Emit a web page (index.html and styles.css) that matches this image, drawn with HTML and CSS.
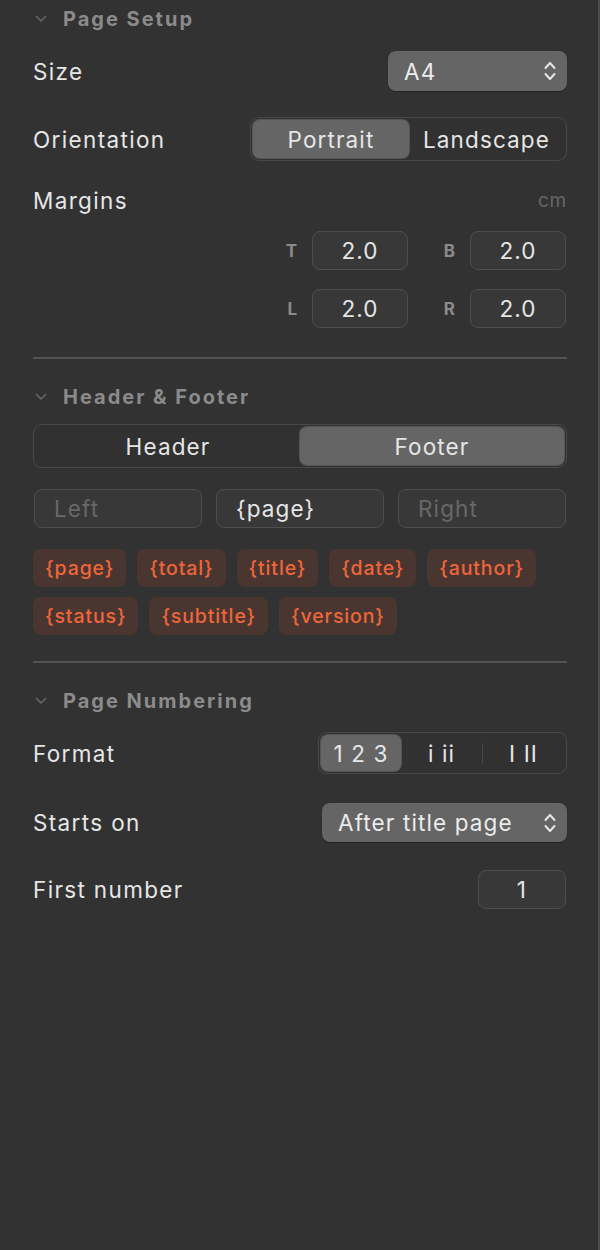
FILE: index.html
```html
<!DOCTYPE html>
<html lang="en">

<head>
  <meta charset="UTF-8">
  <meta name="viewport" content="width=device-width, initial-scale=1.0">
  <title>Page Setup</title>
  <link rel="stylesheet" href="styles.css">
</head>

<body>
  <div class="panel">
    <!-- Page Setup -->
    <div class="section-head">
      <svg class="chev" width="12" height="8" viewBox="0 0 12 8"><path d="M1.5 1.5 L6 6 L10.5 1.5" /></svg>
      <span>Page Setup</span>
    </div>
    <div class="row row-size">
      <span class="label">Size</span>
      <div class="select select-size">
        <span>A4</span>
        <svg class="updown" width="14" height="24" viewBox="0 0 14 24"><path d="M2.5 9 L7 4 L11.5 9 M2.5 15 L7 20 L11.5 15" /></svg>
      </div>
    </div>
    <div class="row row-orient">
      <span class="label">Orientation</span>
      <div class="seg seg-orient">
        <div class="seg-item on">Portrait</div>
        <div class="seg-item">Landscape</div>
      </div>
    </div>
    <div class="row row-margins">
      <span class="label">Margins</span>
      <span class="unit">cm</span>
    </div>
    <div class="margin-grid">
      <span class="mlabel">T</span>
      <div class="field num">2.0</div>
      <span class="mlabel">B</span>
      <div class="field num">2.0</div>
      <span class="mlabel">L</span>
      <div class="field num">2.0</div>
      <span class="mlabel">R</span>
      <div class="field num">2.0</div>
    </div>
    <div class="divider"></div>

    <!-- Header & Footer -->
    <div class="section-head">
      <svg class="chev" width="12" height="8" viewBox="0 0 12 8"><path d="M1.5 1.5 L6 6 L10.5 1.5" /></svg>
      <span>Header &amp; Footer</span>
    </div>
    <div class="seg seg-hf">
      <div class="seg-item">Header</div>
      <div class="seg-item on">Footer</div>
    </div>
    <div class="hf-fields">
      <div class="field text placeholder">Left</div>
      <div class="field text">{page}</div>
      <div class="field text placeholder">Right</div>
    </div>
    <div class="chips">
      <span class="chip">{page}</span>
      <span class="chip">{total}</span>
      <span class="chip">{title}</span>
      <span class="chip">{date}</span>
      <span class="chip">{author}</span>
      <span class="chip">{status}</span>
      <span class="chip">{subtitle}</span>
      <span class="chip">{version}</span>
    </div>
    <div class="divider divider-2"></div>

    <!-- Page Numbering -->
    <div class="section-head">
      <svg class="chev" width="12" height="8" viewBox="0 0 12 8"><path d="M1.5 1.5 L6 6 L10.5 1.5" /></svg>
      <span>Page Numbering</span>
    </div>
    <div class="row row-format">
      <span class="label">Format</span>
      <div class="seg seg-format">
        <div class="seg-item on">1 2 3</div>
        <div class="seg-item">i ii</div>
        <div class="sep"></div>
        <div class="seg-item">I II</div>
      </div>
    </div>
    <div class="row row-starts">
      <span class="label">Starts on</span>
      <div class="select select-starts">
        <span>After title page</span>
        <svg class="updown" width="14" height="24" viewBox="0 0 14 24"><path d="M2.5 9 L7 4 L11.5 9 M2.5 15 L7 20 L11.5 15" /></svg>
      </div>
    </div>
    <div class="row row-first">
      <span class="label">First number</span>
      <div class="field num first">1</div>
    </div>
  </div>
</body>

</html>
```

FILE: styles.css
```css
* {
  margin: 0;
  padding: 0;
  box-sizing: border-box;
}

body {
  background-color: #323232;
  font-family: Inter, "Noto Sans", "Liberation Sans", sans-serif;
  color: #e6e6e6;
}

.panel {
  width: 600px;
  height: 1250px;
  padding: 7px 31px 0 33px;
  border-right: 2px solid #4b4b4b;
}

/* section header */
.section-head {
  height: 24px;
  display: flex;
  align-items: center;
  font-size: 20px;
  font-weight: 700;
  letter-spacing: 2px;
  color: #8b8b8b;
}

.chev {
  margin-left: 2px;
  margin-right: 16px;
  fill: none;
  stroke: #666;
  stroke-width: 1.6;
  stroke-linecap: round;
  stroke-linejoin: round;
}

.row {
  display: flex;
  align-items: center;
  justify-content: space-between;
}

.label {
  font-size: 22.5px;
  letter-spacing: 0.06em;
  color: #e6e6e6;
}

/* selects */
.select {
  height: 40px;
  background-color: #656565;
  border-radius: 8px;
  display: flex;
  align-items: center;
  justify-content: space-between;
  padding: 0 10px 0 16px;
  font-size: 22.5px;
  letter-spacing: 0.05em;
  color: #ececec;
  box-shadow: 0 1px 1px rgba(0, 0, 0, 0.3);
}

.updown {
  fill: none;
  stroke: #e6e6e6;
  stroke-width: 2;
  stroke-linecap: round;
  stroke-linejoin: round;
}

.row-size {
  height: 40px;
  margin-top: 20px;
}

.select-size {
  width: 179px;
}

/* segmented controls */
.seg {
  display: flex;
  align-items: center;
  height: 44px;
  padding: 2px;
  border: 1px solid #484848;
  border-radius: 9px;
  background-color: #313131;
}

.seg-item {
  height: 100%;
  flex: 1;
  display: flex;
  align-items: center;
  justify-content: center;
  font-size: 22.5px;
  letter-spacing: 0.05em;
  color: #e6e6e6;
  border-radius: 7px;
}

.seg-item.on {
  background-color: #656565;
  box-shadow: 0 0 0 1px #555;
}

.row-orient {
  height: 44px;
  margin-top: 26px;
}

.seg-orient {
  width: 317px;
}

.seg-orient .seg-item:first-child {
  flex: 0 0 156px;
}

/* margins */
.row-margins {
  height: 24px;
  margin-top: 27px;
}

.unit {
  font-size: 19px;
  letter-spacing: 0.04em;
  color: #666;
}

.margin-grid {
  display: grid;
  grid-template-columns: 96px 96px 62px 96px;
  justify-content: end;
  align-items: center;
  row-gap: 19px;
  margin-top: 19px;
  margin-right: 1px;
}

.mlabel {
  text-align: right;
  padding-right: 15px;
  font-size: 17px;
  font-weight: 700;
  color: #8b8b8b;
}

.field {
  height: 39px;
  background-color: #383838;
  border: 1px solid #4e4e4e;
  border-radius: 8px;
  display: flex;
  align-items: center;
  font-size: 22.5px;
  letter-spacing: 0.05em;
  color: #e6e6e6;
}

.field.num {
  justify-content: center;
}

.divider {
  height: 2px;
  background-color: #545454;
  margin-top: 29px;
}

.divider + .section-head {
  margin-top: 26px;
}

/* header & footer */
.seg-hf {
  margin-top: 15px;
  height: 44px;
  width: 534px;
}

.hf-fields {
  display: grid;
  grid-template-columns: 168px 168px 168px;
  justify-content: space-between;
  margin-top: 21px;
  padding-left: 1px;
  margin-right: 1px;
}

.field.text {
  padding-left: 19px;
}

.field.placeholder {
  color: #686868;
}

.chips {
  display: flex;
  flex-wrap: wrap;
  gap: 10px 11px;
  margin-top: 21px;
  width: 520px;
}

.chip {
  height: 38px;
  padding: 0 12px;
  display: flex;
  align-items: center;
  background-color: #4a3630;
  border-radius: 8px;
  font-size: 19.5px;
  font-weight: 500;
  letter-spacing: 0.045em;
  color: #f0653a;
}

.divider-2 {
  margin-top: 26px;
}

/* page numbering */
.row-format {
  height: 42px;
  margin-top: 19px;
}

.seg-format {
  width: 249px;
  height: 42px;
}

.seg-format .seg-item {
  flex: 1;
}

.seg-format .seg-item.on {
  flex: 0 0 80px;
}

.sep {
  width: 1px;
  height: 20px;
  background-color: #4a4a4a;
}

.row-starts {
  height: 39px;
  margin-top: 29px;
}

.select-starts {
  width: 245px;
  height: 39px;
}

.row-first {
  height: 39px;
  margin-top: 28px;
}

.field.first {
  width: 88px;
  margin-right: 1px;
}
```
